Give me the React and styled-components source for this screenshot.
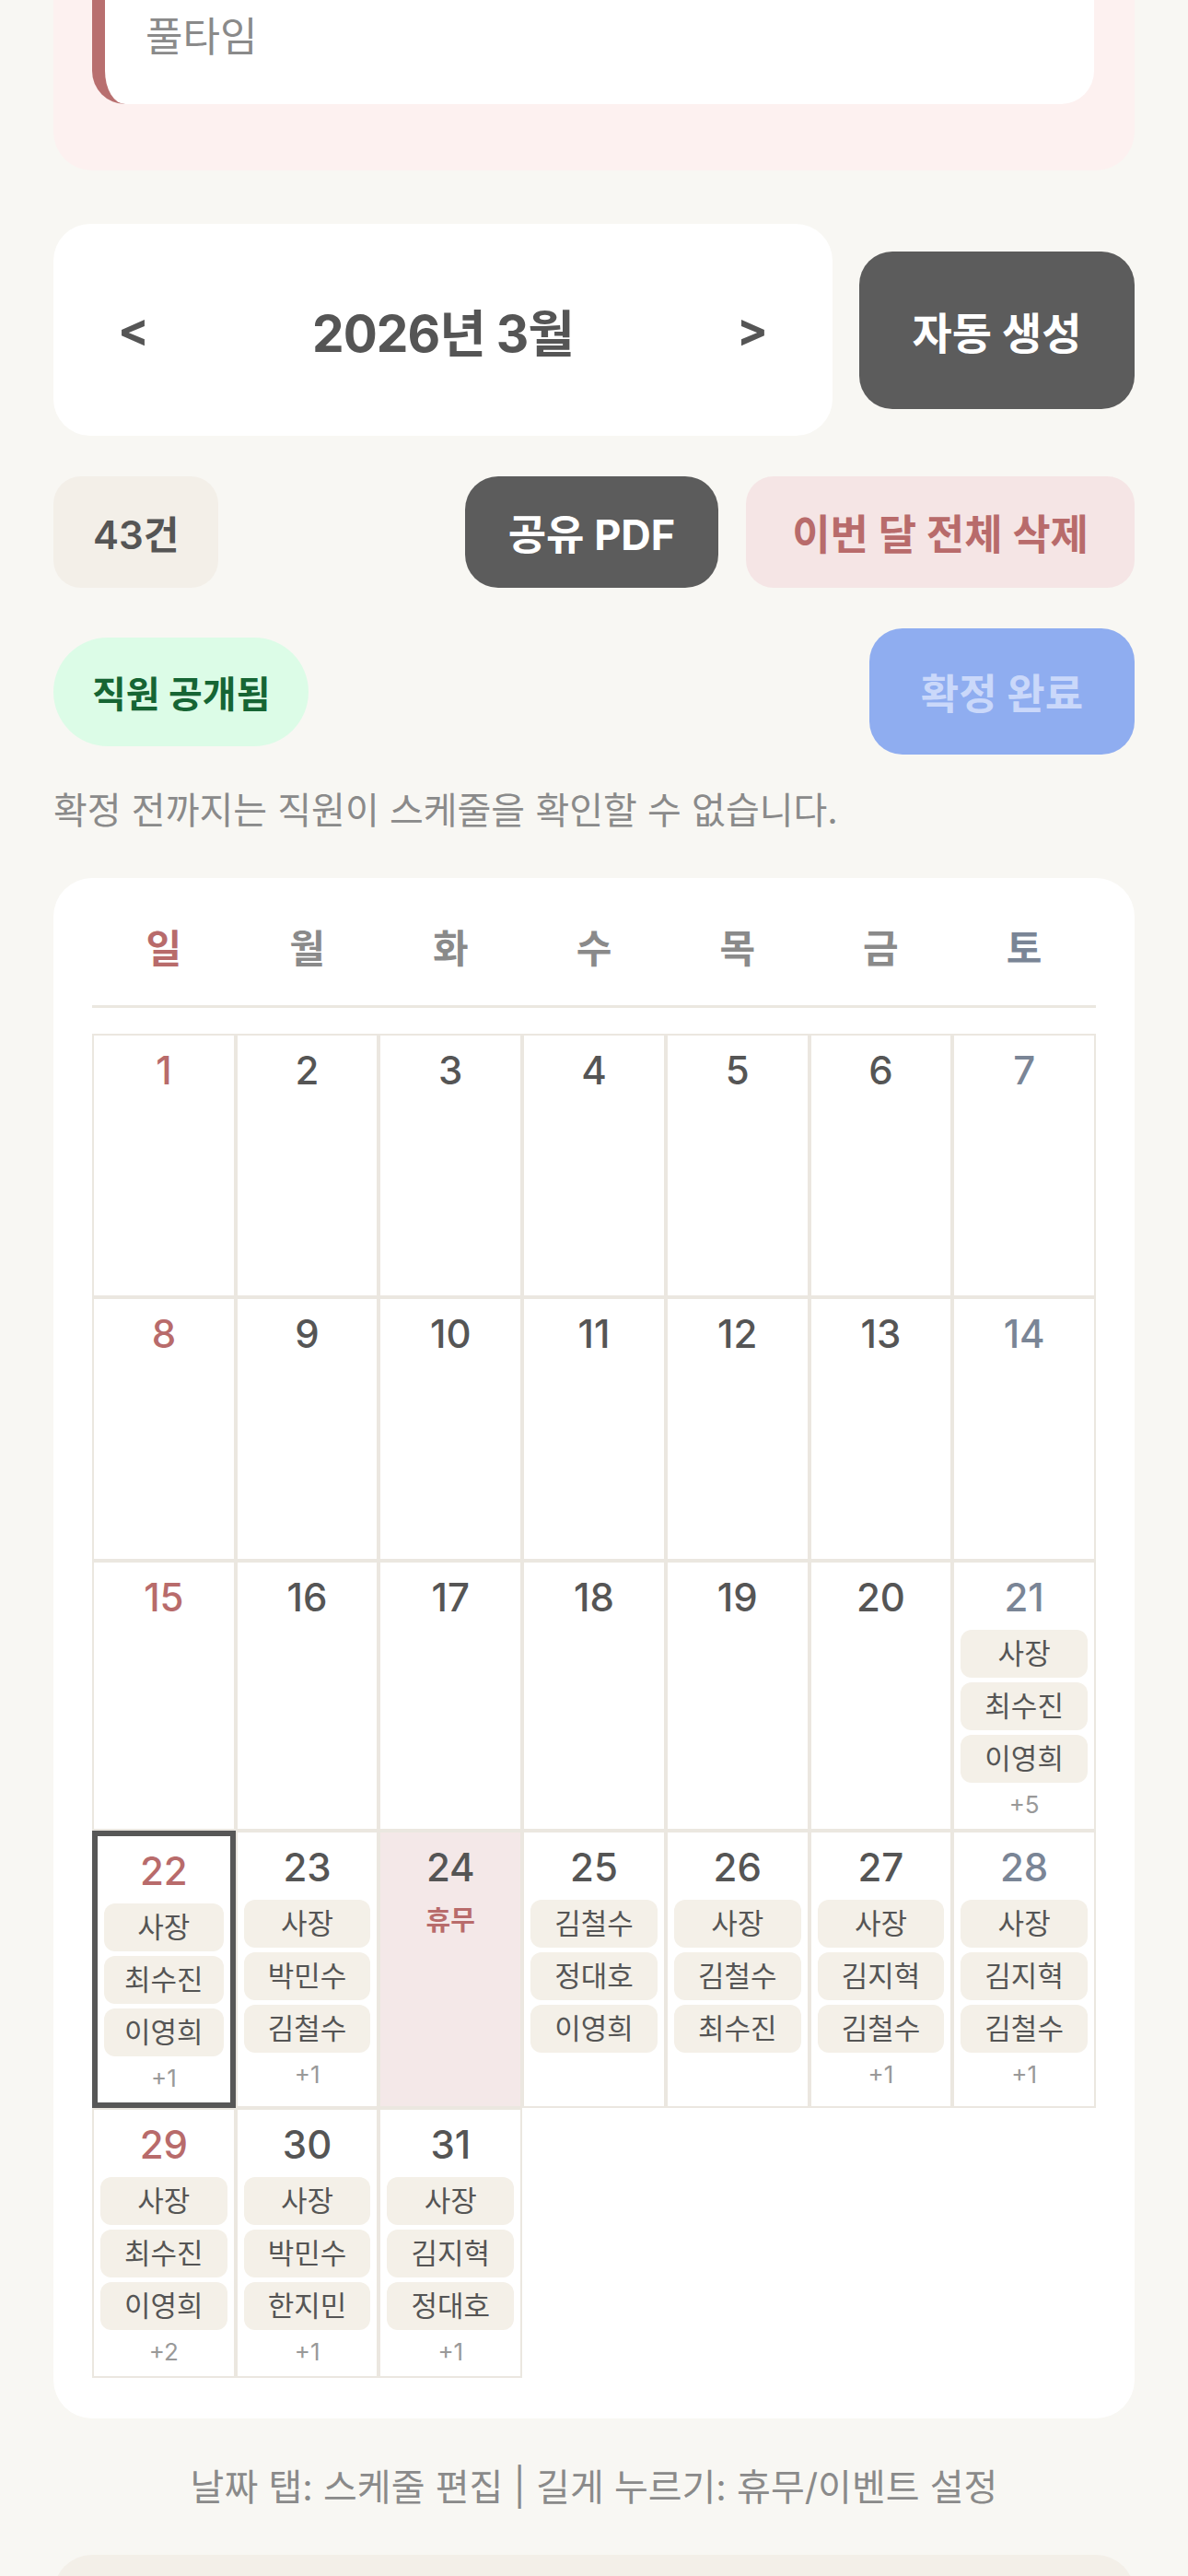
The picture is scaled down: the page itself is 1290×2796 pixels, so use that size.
import React from 'react'
import styled, { createGlobalStyle } from 'styled-components'

const GlobalStyle = createGlobalStyle`
  * { box-sizing: border-box; }
  body {
    margin: 0;
    background: #f8f7f3;
    font-family: "Inter", "Noto Sans CJK KR", sans-serif;
    color: #555;
  }
`

const WEEKDAYS = ['일', '월', '화', '수', '목', '금', '토']

// schedule per day of March 2026 (1st is a Sunday)
const schedule = {
  21: { names: ['사장', '최수진', '이영희'], more: 5 },
  22: { names: ['사장', '최수진', '이영희'], more: 1 },
  23: { names: ['사장', '박민수', '김철수'], more: 1 },
  24: { holiday: true },
  25: { names: ['김철수', '정대호', '이영희'] },
  26: { names: ['사장', '김철수', '최수진'] },
  27: { names: ['사장', '김지혁', '김철수'], more: 1 },
  28: { names: ['사장', '김지혁', '김철수'], more: 1 },
  29: { names: ['사장', '최수진', '이영희'], more: 2 },
  30: { names: ['사장', '박민수', '한지민'], more: 1 },
  31: { names: ['사장', '김지혁', '정대호'], more: 1 },
}

const SELECTED = 22

const App = () => {
  const days = Array.from({ length: 31 }, (_, i) => i + 1)
  const blanks = 4

  return (
    <>
      <GlobalStyle />
      <Page>
        <TypeCard>
          <TypeOption>풀타임</TypeOption>
        </TypeCard>

        <MonthRow>
          <MonthNav>
            <NavArrow>&lt;</NavArrow>
            <MonthTitle>2026년 3월</MonthTitle>
            <NavArrow>&gt;</NavArrow>
          </MonthNav>
          <DarkButton $big>자동 생성</DarkButton>
        </MonthRow>

        <ActionRow>
          <CountChip>43건</CountChip>
          <ActionGroup>
            <DarkButton>공유 PDF</DarkButton>
            <DangerButton>이번 달 전체 삭제</DangerButton>
          </ActionGroup>
        </ActionRow>

        <StatusRow>
          <StatusPill>직원 공개됨</StatusPill>
          <ConfirmButton disabled>확정 완료</ConfirmButton>
        </StatusRow>

        <Note>확정 전까지는 직원이 스케줄을 확인할 수 없습니다.</Note>

        <CalendarCard>
          <WeekHeader>
            {WEEKDAYS.map((d, i) => (
              <WeekDay key={d} $col={i}>{d}</WeekDay>
            ))}
          </WeekHeader>
          <Grid>
            {days.map((day) => {
              const col = (day - 1) % 7
              const info = schedule[day] || {}
              return (
                <Cell key={day} $selected={day === SELECTED} $holiday={info.holiday}>
                  <DayNum $col={col}>{day}</DayNum>
                  {info.holiday && <HolidayLabel>휴무</HolidayLabel>}
                  {info.names && (
                    <ChipList>
                      {info.names.map((n, i) => (
                        <Chip key={i}>{n}</Chip>
                      ))}
                    </ChipList>
                  )}
                  {info.more && <More>+{info.more}</More>}
                </Cell>
              )
            })}
            {Array.from({ length: blanks }).map((_, i) => (
              <EmptyCell key={'b' + i} />
            ))}
          </Grid>
        </CalendarCard>

        <Hint>날짜 탭: 스케줄 편집 | 길게 누르기: 휴무/이벤트 설정</Hint>

        <BottomCard />
      </Page>
    </>
  )
}

export default App

const Page = styled.div`
  padding: 0 58px;
  display: flex;
  flex-direction: column;
`

const TypeCard = styled.div`
  background: #fdf1f0;
  border-radius: 0 0 42px 42px;
  padding: 0 44px 72px 42px;
`

const TypeOption = styled.div`
  background: #fff;
  border-left: 14px solid #b86f6f;
  border-radius: 0 0 36px 36px;
  padding: 10px 0 43px 44px;
  font-size: 44px;
  line-height: 60px;
  color: #8a8a8a;
`

const MonthRow = styled.div`
  margin-top: 58px;
  display: flex;
  align-items: center;
  gap: 29px;
`

const MonthNav = styled.div`
  flex: 1;
  height: 230px;
  background: #fff;
  border-radius: 40px;
  display: flex;
  align-items: center;
  justify-content: space-between;
  padding: 0 70px 0 70px;
`

const NavArrow = styled.span`
  font-size: 50px;
  font-weight: 700;
  color: #555;
  line-height: 60px;
`

const MonthTitle = styled.span`
  font-size: 55px;
  font-weight: 700;
  color: #555;
  letter-spacing: -1px;
`

const DarkButton = styled.button`
  border: none;
  background: #5c5c5c;
  color: #fff;
  font-family: inherit;
  font-weight: 700;
  font-size: ${(p) => (p.$big ? '47px' : '45px')};
  height: ${(p) => (p.$big ? '171px' : '121px')};
  width: ${(p) => (p.$big ? '299px' : 'auto')};
  padding: ${(p) => (p.$big ? '0' : '0 47px')};
  border-radius: 36px;
`

const ActionRow = styled.div`
  margin-top: 44px;
  display: flex;
  align-items: center;
`

const CountChip = styled.div`
  height: 121px;
  padding: 0 43px;
  display: flex;
  align-items: center;
  background: #f3efe8;
  border-radius: 30px;
  font-size: 42px;
  font-weight: 600;
  color: #555;
`

const ActionGroup = styled.div`
  margin-left: auto;
  display: flex;
  gap: 30px;
`

const DangerButton = styled.button`
  border: none;
  background: #f5e5e5;
  color: #b86b6b;
  font-family: inherit;
  font-weight: 700;
  font-size: 45px;
  height: 121px;
  padding: 0 50px;
  border-radius: 30px;
`

const StatusRow = styled.div`
  margin-top: 44px;
  display: flex;
  align-items: center;
  justify-content: space-between;
`

const StatusPill = styled.div`
  height: 118px;
  padding: 0 42px;
  display: flex;
  align-items: center;
  border-radius: 60px;
  background: #dcfce7;
  color: #166534;
  font-size: 40px;
  font-weight: 700;
`

const ConfirmButton = styled.button`
  border: none;
  background: #8fadf0;
  color: #cad8fa;
  font-family: inherit;
  font-weight: 700;
  font-size: 45px;
  width: 288px;
  height: 137px;
  border-radius: 36px;
`

const Note = styled.p`
  margin: 36px 0 0;
  font-size: 40px;
  line-height: 50px;
  color: #8a8a8a;
`

const CalendarCard = styled.div`
  margin-top: 48px;
  background: #fff;
  border-radius: 42px;
  padding: 42px 42px 44px;
`

const WeekHeader = styled.div`
  display: grid;
  grid-template-columns: repeat(7, 1fr);
  padding: 10px 0 36px;
  border-bottom: 3px solid #ebe7e0;
  margin-bottom: 28px;
`

const dayColor = (col, base) => (col === 0 ? '#b86b6b' : col === 6 ? '#7a8596' : base)

const WeekDay = styled.div`
  text-align: center;
  font-size: 42px;
  line-height: 50px;
  font-weight: 700;
  color: ${(p) => dayColor(p.$col, '#8a8a8a')};
`

const Grid = styled.div`
  display: grid;
  grid-template-columns: repeat(7, 1fr);
`

const Cell = styled.div`
  min-height: 286px;
  border: ${(p) => (p.$selected ? '6px solid #575757' : '2px solid #ebe7e0')};
  background: ${(p) => (p.$holiday ? '#f4e8e8' : '#fff')};
  padding: 13px 7px 10px;
  display: flex;
  flex-direction: column;
  align-items: stretch;
`

const EmptyCell = styled.div``

const DayNum = styled.div`
  text-align: center;
  font-size: 42px;
  line-height: 50px;
  font-weight: 500;
  color: ${(p) => dayColor(p.$col, '#555')};
`

const HolidayLabel = styled.div`
  margin-top: 15px;
  text-align: center;
  font-size: 29px;
  line-height: 36px;
  font-weight: 700;
  color: #b86b6b;
`

const ChipList = styled.div`
  margin-top: 10px;
  display: flex;
  flex-direction: column;
  gap: 5px;
`

const Chip = styled.div`
  height: 52px;
  line-height: 52px;
  border-radius: 12px;
  background: #f4f0e8;
  text-align: center;
  font-size: 31px;
  color: #555;
  white-space: nowrap;
`

const More = styled.div`
  margin-top: 8px;
  text-align: center;
  font-size: 26px;
  line-height: 32px;
  color: #999;
`

const Hint = styled.p`
  margin: 50px 0 0;
  text-align: center;
  font-size: 40px;
  line-height: 50px;
  color: #8a8a8a;
`

const BottomCard = styled.div`
  margin-top: 48px;
  height: 240px;
  background: #f3efe8;
  border-radius: 42px 42px 0 0;
`
